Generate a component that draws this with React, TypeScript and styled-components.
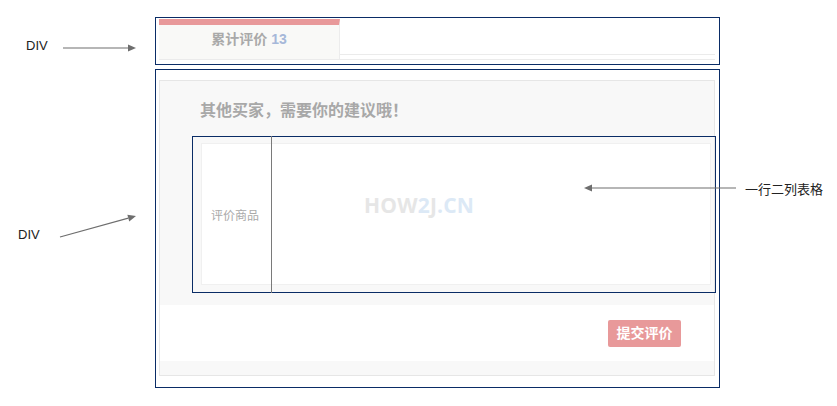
import styled, { createGlobalStyle } from 'styled-components';

const GlobalStyle = createGlobalStyle`
  html, body {
    margin: 0;
    padding: 0;
    background: #ffffff;
  }
  body {
    font-family: "Liberation Sans", Arial, "Noto Sans CJK SC", sans-serif;
  }
`;

const NAVY = '#0a2c66';
const PINK = '#e8999a';

const Canvas = styled.div`
  position: relative;
  width: 837px;
  height: 406px;
  overflow: hidden;
`;

const Column = styled.div`
  width: 565px;
  margin-left: 155px;
  padding-top: 17px;
  display: flex;
  flex-direction: column;
  gap: 4px;
`;

const OutlineBox = styled.div`
  border: 1px solid ${NAVY};
  box-sizing: border-box;
`;

const TabBox = styled(OutlineBox)`
  height: 48px;
  padding: 1px 4px 4px 3px;
`;

const TabStrip = styled.div`
  display: flex;
  align-items: flex-start;
  height: 41px;
  box-sizing: border-box;
  border-bottom: 1px solid #ebebeb;
`;

const Tab = styled.div`
  width: 181px;
  height: 40px;
  box-sizing: border-box;
  border-top: 6px solid ${PINK};
  border-right: 1px solid #ececec;
  background: #f9f9f7;
  text-align: center;
  line-height: 29px;
  font-size: 14px;
  font-weight: bold;
  color: #a9a9a9;
`;

const Count = styled.span`
  color: #a6b8d9;
`;

const TabFill = styled.div`
  flex: 1;
  height: 36px;
  box-sizing: border-box;
  border-bottom: 1px solid #ebebeb;
`;

const FormBox = styled(OutlineBox)`
  height: 319px;
  padding: 10px 4px 11px 3px;
`;

const Panel = styled.div`
  border: 1px solid #e6e6e6;
  height: 296px;
  box-sizing: border-box;
  display: flex;
  flex-direction: column;
  background: #f8f8f8;
`;

const Question = styled.div`
  padding: 18px 3px 20px 40px;
`;

const Heading = styled.h3`
  margin: 0 0 20px 0;
  font-size: 16px;
  line-height: 24px;
  font-weight: bold;
  color: #a8a8a8;
`;

const ReviewRow = styled.div`
  position: relative;
  margin-left: 1px;
  height: 142px;
  box-sizing: border-box;
  border: 1px solid #f0f0f0;
  background: #ffffff;
  display: flex;
  align-items: center;
`;

const RowLabel = styled.div`
  width: 60px;
  padding-left: 9px;
  font-size: 12px;
  color: #aaaaaa;
`;

const Watermark = styled.div`
  position: absolute;
  left: 162px;
  top: 47px;
  font-size: 21px;
  font-weight: bold;
  letter-spacing: 0.2px;
  color: #e6e6e6;
  font-family: "Open Sans", "Liberation Sans", sans-serif;
`;

const Accent = styled.span`
  color: #dce9f6;
`;

const Footer = styled.div`
  background: #ffffff;
  height: 56px;
  display: flex;
  justify-content: flex-end;
  align-items: flex-start;
  padding: 15px 33px 0 0;
  box-sizing: border-box;
`;

const SubmitButton = styled.button`
  height: 27px;
  width: 73px;
  padding: 0;
  border: none;
  border-radius: 2px;
  background: ${PINK};
  color: #ffffff;
  font-size: 14px;
  font-weight: bold;
  font-family: "Liberation Sans", Arial, "Noto Sans CJK SC", sans-serif;
  line-height: 27px;
`;

const Frame = styled.div<{ $x: number; $y: number; $w: number; $h: number }>`
  position: absolute;
  left: ${(p) => p.$x}px;
  top: ${(p) => p.$y}px;
  width: ${(p) => p.$w}px;
  height: ${(p) => p.$h}px;
  box-sizing: border-box;
  border: 1px solid ${NAVY};
  pointer-events: none;
`;

const Divider = styled.div`
  position: absolute;
  left: 78px;
  top: -1px;
  bottom: -1px;
  width: 1px;
  background: #7a7a7a;
`;

const Note = styled.div<{ $x: number; $y: number }>`
  position: absolute;
  left: ${(p) => p.$x}px;
  top: ${(p) => p.$y}px;
  font-size: 13px;
  line-height: 16px;
  color: #222;
  white-space: nowrap;
`;

const Arrows = styled.svg`
  position: absolute;
  left: 0;
  top: 0;
  pointer-events: none;
`;

function Arrow({ x1, y1, x2, y2 }: { x1: number; y1: number; x2: number; y2: number }) {
  const a = Math.atan2(y2 - y1, x2 - x1);
  const len = 8;
  const w = 3.5;
  const bx = x2 - Math.cos(a) * len;
  const by = y2 - Math.sin(a) * len;
  const px = -Math.sin(a) * w;
  const py = Math.cos(a) * w;
  return (
    <g>
      <line x1={x1} y1={y1} x2={bx} y2={by} stroke="#6e6e6e" strokeWidth={1.2} />
      <polygon points={`${x2},${y2} ${bx + px},${by + py} ${bx - px},${by - py}`} fill="#6e6e6e" />
    </g>
  );
}

export default function App() {
  return (
    <Canvas>
      <GlobalStyle />
      <Column>
        <TabBox>
          <TabStrip>
            <Tab>
              累计评价 <Count>13</Count>
            </Tab>
            <TabFill />
          </TabStrip>
        </TabBox>

        <FormBox>
          <Panel>
            <Question>
              <Heading>其他买家，需要你的建议哦！</Heading>
              <ReviewRow>
                <RowLabel>评价商品</RowLabel>
                <Watermark>
                  HOW<Accent>2</Accent>J<Accent>.CN</Accent>
                </Watermark>
              </ReviewRow>
            </Question>
            <Footer>
              <SubmitButton>提交评价</SubmitButton>
            </Footer>
          </Panel>
        </FormBox>
      </Column>

      <Frame $x={192} $y={136} $w={524} $h={157}>
        <Divider />
      </Frame>

      <Note $x={26} $y={38}>DIV</Note>
      <Note $x={18} $y={227}>DIV</Note>
      <Note $x={745} $y={182}>一行二列表格</Note>

      <Arrows width={837} height={406}>
        <Arrow x1={63} y1={48} x2={136} y2={48} />
        <Arrow x1={60} y1={237} x2={136} y2={216} />
        <Arrow x1={736} y1={188} x2={584} y2={188} />
      </Arrows>
    </Canvas>
  );
}
